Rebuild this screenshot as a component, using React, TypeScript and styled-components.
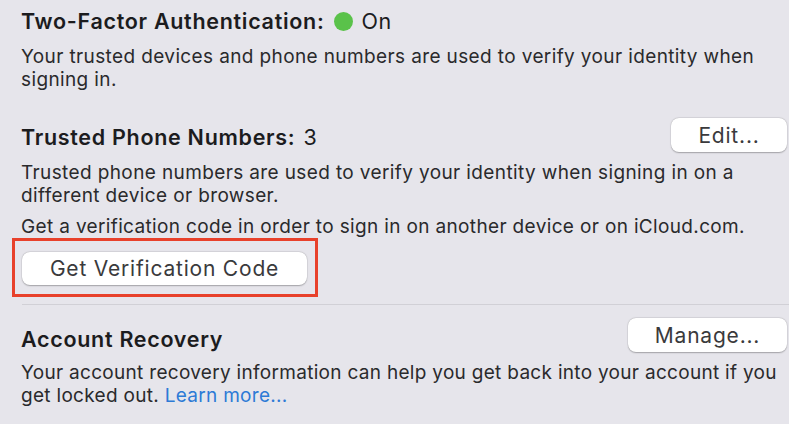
import React from 'react';
import styled, { createGlobalStyle } from 'styled-components';

const GlobalStyle = createGlobalStyle`
  html, body {
    margin: 0;
    padding: 0;
    background: #e6e5eb;
  }
  body {
    font-family: Inter, "Noto Sans", "Liberation Sans", sans-serif;
    -webkit-font-smoothing: antialiased;
  }
`;

const Page = styled.div`
  width: 789px;
  height: 424px;
  overflow: hidden;
  background: #e6e5eb;
  box-sizing: border-box;
  padding: 7px 2px 0 21px;
`;

const Section = styled.section<{ $top?: number }>`
  display: flex;
  flex-direction: column;
  margin-top: ${p => p.$top ?? 0}px;
`;

const HeaderRow = styled.div`
  display: flex;
  align-items: flex-start;
  justify-content: space-between;
`;

const Heading = styled.h3<{ $offset?: number }>`
  margin: ${p => p.$offset ?? 0}px 0 0 0;
  font-size: 21.5px;
  line-height: 28px;
  font-weight: 600;
  letter-spacing: 0.7px;
  color: #1c1c1e;
  display: flex;
  align-items: center;
  white-space: nowrap;
`;

const Value = styled.span`
  font-weight: 400;
  margin-left: 8px;
`;

const StatusDot = styled.span`
  width: 19px;
  height: 19px;
  border-radius: 50%;
  background: #5ac24a;
  display: inline-block;
  margin-left: 10px;
`;

const Body = styled.p<{ $top?: number; $spacing?: number }>`
  margin: ${p => p.$top ?? 0}px 0 0 0;
  font-size: 19px;
  line-height: 23px;
  color: #2a2a2c;
  letter-spacing: ${p => p.$spacing ?? 0.38}px;
  white-space: nowrap;
`;

const Link = styled.a`
  color: #2d7ad6;
  text-decoration: none;
`;

const PushButton = styled.button<{ $width: number }>`
  width: ${p => p.$width}px;
  height: 34px;
  border: none;
  border-radius: 8px;
  background: #ffffff;
  box-shadow: 0 0.5px 1.5px rgba(0, 0, 0, 0.28), 0 0 0 0.5px rgba(0, 0, 0, 0.06);
  font-family: inherit;
  font-size: 21px;
  letter-spacing: 0.8px;
  color: #3a3a3c;
  padding: 0;
  cursor: default;
`;

const WideButton = styled(PushButton)`
  height: 33px;
`;

// red annotation frame around the verification button
const Highlight = styled.div`
  align-self: flex-start;
  margin-left: -9px;
  padding: 11px 8px 9px 7px;
  border: 3px solid #e8412b;
`;

const Divider = styled.hr<{ $top: number }>`
  border: none;
  height: 1px;
  background: #d1d0d6;
  margin: ${p => p.$top}px -2px 0 1px;
`;

export default function App() {
  return (
    <Page>
      <GlobalStyle />
      <Section>
        <Heading>
          Two-Factor Authentication:
          <StatusDot />
          <Value>On</Value>
        </Heading>
        <Body $top={10}>
          Your trusted devices and phone numbers are used to verify your identity when
          <br />
          signing in.
        </Body>
      </Section>

      <Section $top={27}>
        <HeaderRow>
          <Heading $offset={5}>
            Trusted Phone Numbers:<Value>3</Value>
          </Heading>
          <PushButton $width={116}>Edit...</PushButton>
        </HeaderRow>
        <Body $top={9}>
          Trusted phone numbers are used to verify your identity when signing in on a
          <br />
          different device or browser.
        </Body>
        <Body $top={8} $spacing={0.35}>
          Get a verification code in order to sign in on another device or on iCloud.com.
        </Body>
        <Highlight>
          <WideButton $width={285}>Get Verification Code</WideButton>
        </Highlight>
      </Section>

      <Divider $top={7} />

      <Section $top={13}>
        <HeaderRow>
          <Heading $offset={7}>Account Recovery</Heading>
          <PushButton $width={159}>Manage...</PushButton>
        </HeaderRow>
        <Body $top={8} $spacing={0.3}>
          Your account recovery information can help you get back into your account if you
          <br />
          get locked out. <Link href="#">Learn more...</Link>
        </Body>
      </Section>
    </Page>
  );
}
